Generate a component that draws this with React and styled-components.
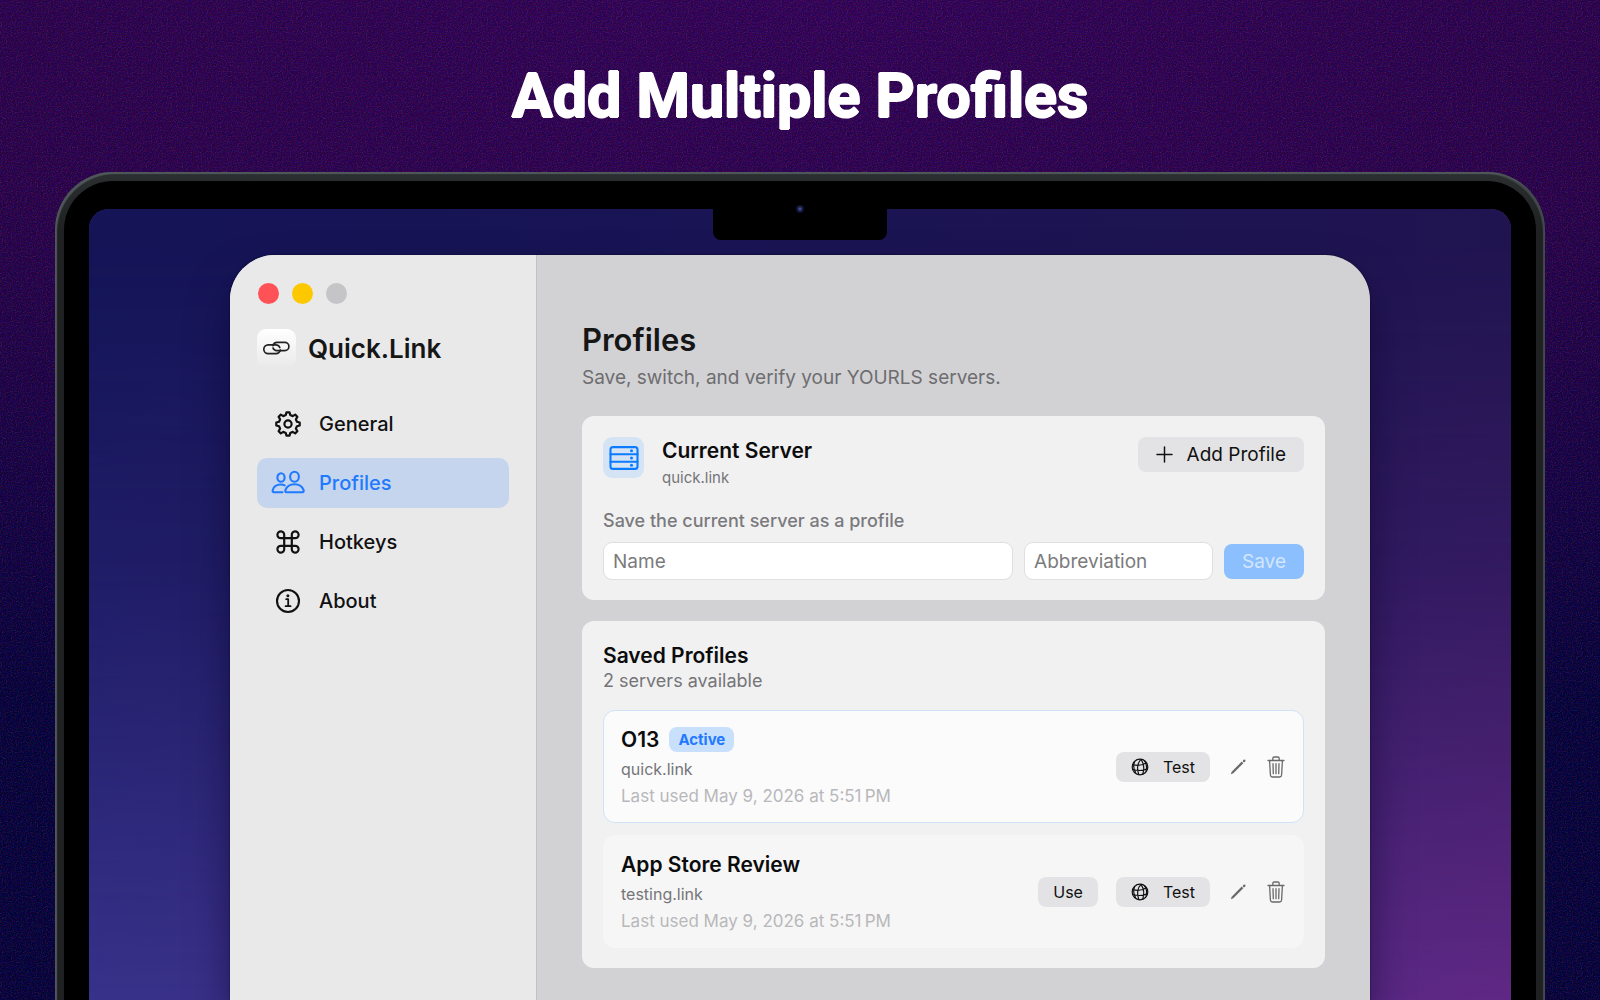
import React from 'react';
import styled, { createGlobalStyle, css } from 'styled-components';

const Global = createGlobalStyle`
  *, *::before, *::after { box-sizing: border-box; }
  body { margin: 0; background: #02003a; }
  h1, h2, h3, p { margin: 0; }
  button, input { font: inherit; }
`;

const ui = css`
  font-family: Inter, Roboto, sans-serif;
`;

const Stage = styled.main`
  ${ui}
  position: relative;
  isolation: isolate;
  min-height: 100vh;
  overflow: hidden;
  display: flex;
  flex-direction: column;
  align-items: center;
  padding: 60px 55px 0;
  background: radial-gradient(ellipse 130% 75% at 50% 0, #320058 0%, #28004a 45%, #120042 75%, #010038 100%);
`;

const Grain = styled.svg`
  position: absolute;
  inset: 0;
  width: 100%;
  height: 100%;
  z-index: -1;
  opacity: 0.16;
`;

/* Shadows in a ring thicken the strokes and soften their corners. */
const Headline = styled.h1`
  font-family: Roboto, "Noto Sans", sans-serif;
  font-size: 61px;
  line-height: 72px;
  font-weight: 700;
  color: #fff;
  text-shadow: 1px 0 #fff, -1px 0 #fff, 0 1px #fff, 0 -1px #fff;
  white-space: nowrap;
`;

const Laptop = styled.div`
  flex: 1;
  align-self: stretch;
  display: flex;
  margin-top: 40px;
  padding: 9px 9px 0;
  border-radius: 58px 58px 0 0;
  background: linear-gradient(#2b2f30, #1f2122 60px);
  box-shadow: inset 2px 2px 1px #50575b, inset -2px 2px 1px #434a4d;
`;

const Bezel = styled.div`
  flex: 1;
  display: flex;
  padding: 28px 25px 0;
  border-radius: 49px 49px 0 0;
  background: #000;
`;

const Screen = styled.div`
  position: relative;
  flex: 1;
  display: flex;
  padding: 46px 141px 0;
  border-radius: 20px 20px 0 0;
  background: linear-gradient(to right, #37328a, #5f2884);
  overflow: hidden;
  &::before {
    content: "";
    position: absolute;
    inset: 0;
    background: linear-gradient(90deg, #141457, #201450);
    mask-image: linear-gradient(#000 5%, rgba(0, 0, 0, 0.7) 45%, transparent 100%);
  }
`;

const Notch = styled.div`
  position: absolute;
  top: 0;
  left: 50%;
  width: 174px;
  height: 31px;
  margin-left: -87px;
  border-radius: 0 0 8px 8px;
  background: #000;
`;

const Camera = styled.span`
  position: absolute;
  top: 205px;
  left: 50%;
  width: 8px;
  height: 8px;
  margin-left: -4px;
  border-radius: 50%;
  background: radial-gradient(#3c4a90 0 15%, #15183c 45%, #05060f);
`;

const Window = styled.section`
  position: relative;
  flex: 1;
  display: flex;
  border-radius: 45px 45px 0 0;
  overflow: hidden;
  background: #d2d2d4;
`;

const WindowShadow = styled.div`
  position: relative;
  flex: 1;
  display: flex;
  border-radius: 45px 45px 0 0;
  box-shadow: 0 24px 40px rgba(8, 2, 40, 0.5), 0 0 2px rgba(0, 0, 0, 0.7);
`;

const Sidebar = styled.aside`
  width: 307px;
  padding: 28px 27px;
  background: #e9e9ea;
  border-right: 1px solid #c2c2c4;
`;

const Lights = styled.div`
  display: flex;
  gap: 13px;
  padding-left: 1px;
`;

const Light = styled.span`
  width: 21px;
  height: 21px;
  border-radius: 50%;
  background: ${(p) => p.$color};
`;

const Brand = styled.div`
  display: flex;
  align-items: center;
  gap: 12px;
  height: 40px;
  margin-top: 24px;
  font-size: 26px;
  font-weight: 600;
  color: #161617;
`;

const BrandMark = styled.span`
  display: grid;
  place-items: center;
  width: 39px;
  height: 39px;
  border-radius: 9px;
  background: linear-gradient(#fff, #f4f4f4 50%, #e9e9ea);
`;

const Nav = styled.nav`
  display: flex;
  flex-direction: column;
  gap: 9px;
  margin-top: 31px;
`;

const NavLink = styled.a`
  display: flex;
  align-items: center;
  gap: 14px;
  height: 50px;
  padding-left: 14px;
  border-radius: 10px;
  font-size: 20px;
  font-weight: 500;
  text-decoration: none;
  color: ${(p) => (p.$active ? '#1f7aff' : '#111')};
  background: ${(p) => (p.$active ? '#c4d5ed' : 'transparent')};
  svg { width: 34px; flex: none; overflow: visible; }
`;

const Content = styled.div`
  flex: 1;
  padding: 66px 45px 31px;
  display: flex;
  flex-direction: column;
`;

const PageTitle = styled.h2`
  font-size: 31px;
  line-height: 38px;
  font-weight: 600;
  color: #161617;
`;

const Lead = styled.p`
  margin-top: 7px;
  font-size: 19px;
  line-height: 24px;
  color: #6d6d70;
`;

const Card = styled.section`
  padding: 21px 21px 20px;
  border-radius: 12px;
  background: #f1f1f2;
  margin-top: ${(p) => p.$gap}px;
`;

const ServerHead = styled.div`
  display: flex;
  align-items: flex-start;
`;

const ServerTile = styled.span`
  display: grid;
  place-items: center;
  width: 41px;
  height: 41px;
  border-radius: 9px;
  background: #d5e4f5;
`;

const ServerText = styled.div`
  flex: 1;
  padding-left: 18px;
`;

const Heading = styled.h3`
  font-size: 21px;
  line-height: 27px;
  font-weight: 600;
  color: #0c0c0d;
`;

const Host = styled.p`
  font-size: ${(p) => (p.$small ? 15 : 16)}px;
  line-height: 28px;
  color: #757578;
`;

const Button = styled.button`
  display: inline-flex;
  align-items: center;
  justify-content: center;
  border: 0;
  height: ${(p) => (p.$small ? 30 : 35)}px;
  padding: 0 ${(p) => (p.$small ? 15 : 18)}px;
  gap: 14px;
  border-radius: 8px;
  font-size: ${(p) => (p.$small ? 16 : 19)}px;
  background: ${(p) => (p.$primary ? '#8bbffd' : '#e3e3e5')};
  color: ${(p) => (p.$primary ? '#d3e6fd' : '#111')};
`;

const FormLabel = styled.p`
  margin-top: 17px;
  font-size: 18px;
  line-height: 24px;
  font-weight: 500;
  color: #7a7a7d;
`;

const Form = styled.form`
  display: flex;
  align-items: center;
  gap: 11px;
  margin-top: 9px;
`;

const Field = styled.input`
  height: 38px;
  min-width: 0;
  ${(p) => (p.$grow ? 'flex: 1;' : 'width: 189px;')}
  padding: 0 9px;
  border: 1px solid #dfdfe1;
  border-radius: 9px;
  background: #fff;
  font-size: 19px;
  &::placeholder { color: #7b7b7d; opacity: 1; }
`;

const Count = styled.p`
  font-size: 18px;
  line-height: 24px;
  color: #757578;
`;

const List = styled.ul`
  display: flex;
  flex-direction: column;
  gap: 12px;
  margin: 17px 0 0;
  padding: 0;
  list-style: none;
`;

const Row = styled.li`
  display: flex;
  align-items: center;
  justify-content: space-between;
  height: 113px;
  padding: 0 17px;
  border-radius: 12px;
  border: 1px solid ${(p) => (p.$active ? '#cfe2f8' : '#f6f6f6')};
  background: ${(p) => (p.$active ? '#fbfbfc' : '#f6f6f6')};
`;

const NameLine = styled.div`
  display: flex;
  align-items: center;
  gap: 10px;
  height: 30px;
`;

const Badge = styled.span`
  height: 25px;
  padding: 0 9px;
  border-radius: 8px;
  background: #c9e0fc;
  color: #1f7aff;
  font-size: 15px;
  line-height: 25px;
  font-weight: 700;
`;

const Used = styled.p`
  font-size: 17px;
  line-height: 26px;
  color: #b8b8ba;
`;

const Actions = styled.div`
  display: flex;
  align-items: center;
  gap: 18px;
`;

const IconButton = styled.button`
  display: grid;
  place-items: center;
  width: 20px;
  height: 30px;
  padding: 0;
  border: 0;
  background: none;
  color: #6a6a6c;
`;

const stroke = { fill: 'none', stroke: 'currentColor', strokeLinecap: 'round', strokeLinejoin: 'round' };

const LinkMark = () => (
  <svg width="29" height="15" viewBox="0 0 29 15" {...stroke} stroke="#222" strokeWidth="1.7">
    <path d="M10.500 3.900H6.200a4.400 4.400 0 0 0 0 8.800H14a4.400 4.400 0 0 0 4.200-3.500" />
    <path d="M18.300 9.600h4.500a4.100 4.100 0 0 0 0-8.200H15a4.100 4.100 0 0 0-4 3.200" />
    <path d="M10.500 3.900h3.300a4.400 4.400 0 0 1 4 2.600M18.300 9.600H15a4.100 4.100 0 0 1-4-2.600" />
  </svg>
);

const gearPath = (() => {
  const pts = [];
  for (let i = 0; i < 8; i += 1) {
    const base = (i * 45 - 90) * (Math.PI / 180);
    [[-14, 9.2], [-7.5, 11.8], [7.5, 11.8], [14, 9.2]].forEach(([d, r]) => {
      const a = base + d * (Math.PI / 180);
      pts.push(`${(14 + r * Math.cos(a)).toFixed(2)} ${(14 + r * Math.sin(a)).toFixed(2)}`);
    });
  }
  return `M${pts.join('L')}Z`;
})();

const Gear = () => (
  <svg height="28" viewBox="0 0 28 28" {...stroke} strokeWidth="2.200">
    <path d={gearPath} />
    <circle cx="14" cy="14" r="3.600" />
  </svg>
);

const People = () => (
  <svg height="24" viewBox="0 0 34 24" {...stroke} strokeWidth="2.100">
    <ellipse cx="10" cy="6.500" rx="3.600" ry="4.300" />
    <ellipse cx="23.500" cy="5.700" rx="4.400" ry="5" />
    <path d="M11.500 21.200H3c-1.200 0-1.600-.9-1.300-2 .8-3.300 4-5.700 8-5.700 1.500 0 2.800.3 4 .9" />
    <path d="M15.600 21.200h15.800c1.200 0 1.600-1 1.200-2.100-1.200-3.500-4.800-5.900-9.100-5.900s-7.900 2.400-9.100 5.900c-.4 1.100 0 2.100 1.200 2.100z" />
  </svg>
);

const Command = () => (
  <svg height="24" viewBox="0 0 24 24" {...stroke} strokeWidth="2.200">
    <path d="M8.200 8.200V5.100a3.400 3.400 0 1 0-3.400 3.100h14.400a3.400 3.400 0 1 0-3.400-3.100v13.800a3.400 3.400 0 1 0 3.400-3.100H4.800a3.400 3.400 0 1 0 3.400 3.100z" />
  </svg>
);

const Info = () => (
  <svg height="26" viewBox="0 0 26 26" {...stroke} strokeWidth="2.100">
    <circle cx="13" cy="13" r="11" />
    <path d="M11.200 11.200h2v6.800M10.600 18.200h5" strokeWidth="1.800" />
    <circle cx="12.900" cy="7.700" r="1.500" fill="currentColor" stroke="none" />
  </svg>
);

const Server = () => (
  <svg width="30" height="24" viewBox="0 0 30 24" {...stroke} stroke="#0b7bff" strokeWidth="2.100">
    <rect x="1.500" y="1.100" width="27" height="21.800" rx="2.500" />
    <path d="M1.500 8.300h27M1.500 15.700h27" />
    {[4.700, 12, 19.300].map((y) => <circle key={y} cx="22.500" cy={y} r="1.500" fill="#0b7bff" stroke="none" />)}
  </svg>
);

const Plus = () => (
  <svg width="17" height="17" viewBox="0 0 17 17" {...stroke} strokeWidth="1.500">
    <path d="M8.500 1v15M1 8.500h15" />
  </svg>
);

const Globe = () => (
  <svg width="18" height="18" viewBox="0 0 18 18" {...stroke} strokeWidth="1.200">
    <circle cx="9" cy="9" r="7.800" />
    <path d="M10 1.300C6.800 4.500 5.800 10.500 7.800 16.600M10 1.300c2.700 4 3.500 9.600 1.700 15M1.700 6.700c4.500 1.200 9.700.8 13.600-2M1.500 11.300c5 1.700 10.700 1.500 15-.9M3.600 3.800c-1.200 3-1 7.400.9 10.600M13.400 2.700c2 2.600 2.600 6.900 1.600 10.500" />
  </svg>
);

const Pencil = () => (
  <svg width="16" height="16" viewBox="0 0 16 16">
    <path d="M0.800 15.200l.9-2.500L11.700 2.600l1.600 1.600L3.300 14.300z" fill="currentColor" />
    <path d="M13.900 2.100l.5-.5" stroke="currentColor" strokeWidth="2.200" strokeLinecap="round" />
  </svg>
);

const Trash = () => (
  <svg width="18" height="22" viewBox="0 0 18 22" {...stroke} strokeWidth="1.300">
    <path d="M1 4.500h16M5.800 4.300V2.400c0-.9.5-1.400 1.400-1.400h3.600c.9 0 1.400.5 1.400 1.400v1.900M2.600 4.700l.8 14.300c.1 1.300.8 2 2 2h7.200c1.200 0 1.900-.7 2-2l.8-14.300M6 7.700l.3 10M9 7.700v10M12 7.700l-.3 10" />
  </svg>
);

const NAV = [
  ['General', Gear],
  ['Profiles', People],
  ['Hotkeys', Command],
  ['About', Info],
];

const PROFILES = [
  { name: 'O13', host: 'quick.link', active: true },
  { name: 'App Store Review', host: 'testing.link', active: false },
];

export default function App() {
  return (
    <Stage>
      <Global />
      <Grain aria-hidden="true">
        <filter id="grain" colorInterpolationFilters="sRGB">
          <feTurbulence type="fractalNoise" baseFrequency="0.800" numOctaves="2" />
          <feColorMatrix values="3.200 0 0 0 -1.400  0 2 0 0 -0.900  0 0 3.200 0 -1.300  0 0 0 0 1" />
        </filter>
        <rect width="100%" height="100%" filter="url(#grain)" />
      </Grain>
      <Headline>Add Multiple Profiles</Headline>
      <Laptop>
        <Bezel>
          <Screen>
            <Notch />
            <WindowShadow>
              <Window>
                <Sidebar>
                  <Lights>
                    <Light $color="#ff5257" />
                    <Light $color="#fdc800" />
                    <Light $color="#c5c5c7" />
                  </Lights>
                  <Brand>
                    <BrandMark><LinkMark /></BrandMark>
                    Quick.Link
                  </Brand>
                  <Nav>
                    {NAV.map(([label, Icon]) => (
                      <NavLink key={label} href={`#${label.toLowerCase()}`} $active={label === 'Profiles'}>
                        <Icon />
                        {label}
                      </NavLink>
                    ))}
                  </Nav>
                </Sidebar>
                <Content>
                  <PageTitle>Profiles</PageTitle>
                  <Lead>Save, switch, and verify your YOURLS servers.</Lead>
                  <Card $gap={26}>
                    <ServerHead>
                      <ServerTile><Server /></ServerTile>
                      <ServerText>
                        <Heading>Current Server</Heading>
                        <Host $small>quick.link</Host>
                      </ServerText>
                      <Button type="button"><Plus />Add Profile</Button>
                    </ServerHead>
                    <FormLabel id="save-label">Save the current server as a profile</FormLabel>
                    <Form aria-labelledby="save-label" onSubmit={(e) => e.preventDefault()}>
                      <Field $grow type="text" aria-label="Name" placeholder="Name" />
                      <Field type="text" aria-label="Abbreviation" placeholder="Abbreviation" />
                      <Button $primary type="submit">Save</Button>
                    </Form>
                  </Card>
                  <Card $gap={21}>
                    <Heading>Saved Profiles</Heading>
                    <Count>2 servers available</Count>
                    <List>
                      {PROFILES.map((p) => (
                        <Row key={p.name} $active={p.active}>
                          <div>
                            <NameLine>
                              <Heading>{p.name}</Heading>
                              {p.active && <Badge>Active</Badge>}
                            </NameLine>
                            <Host>{p.host}</Host>
                            <Used>Last used May 9, 2026 at 5:51{'\u202f'}PM</Used>
                          </div>
                          <Actions>
                            {!p.active && <Button $small type="button">Use</Button>}
                            <Button $small type="button"><Globe />Test</Button>
                            <IconButton type="button" aria-label={`Edit ${p.name}`}><Pencil /></IconButton>
                            <IconButton type="button" aria-label={`Delete ${p.name}`}><Trash /></IconButton>
                          </Actions>
                        </Row>
                      ))}
                    </List>
                  </Card>
                </Content>
              </Window>
            </WindowShadow>
          </Screen>
        </Bezel>
      </Laptop>
      <Camera />
    </Stage>
  );
}
